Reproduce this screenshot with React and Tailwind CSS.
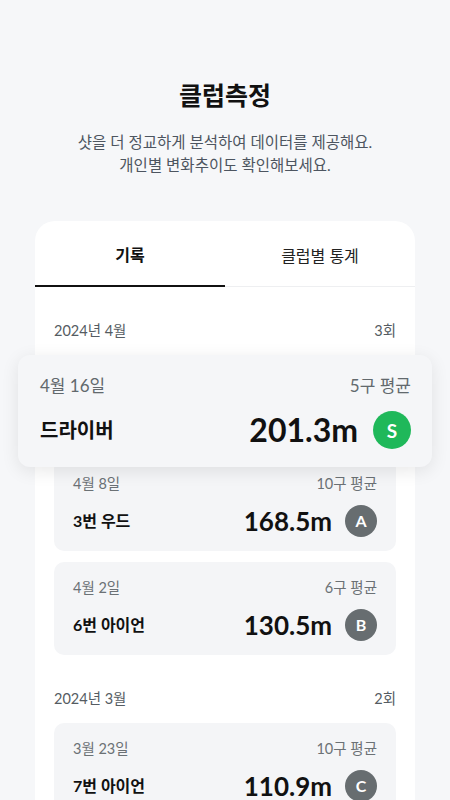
import React, { useState } from 'react'

const MONTHS = [
    {
        label: '2024년 4월',
        count: '3회',
        items: [
            { date: '4월 16일', shots: '5구 평균', club: '드라이버', dist: '201.3m', grade: 'S' },
            { date: '4월 8일', shots: '10구 평균', club: '3번 우드', dist: '168.5m', grade: 'A' },
            { date: '4월 2일', shots: '6구 평균', club: '6번 아이언', dist: '130.5m', grade: 'B' },
        ],
    },
    {
        label: '2024년 3월',
        count: '2회',
        items: [
            { date: '3월 23일', shots: '10구 평균', club: '7번 아이언', dist: '110.9m', grade: 'C' },
            { date: '3월 11일', shots: '8구 평균', club: '9번 아이언', dist: '96.2m', grade: 'B' },
        ],
    },
]

function Grade({ grade, big }) {
    const color = grade === 'S' ? 'bg-[#1fb85a]' : 'bg-[#676d70]'
    return (
        <span
            className={`${color} ${big ? 'w-[38px] h-[38px] text-[19px]' : 'w-8 h-8 text-[16px]'} rounded-full flex items-center justify-center text-white font-bold leading-none shrink-0`}
        >
            {grade}
        </span>
    )
}

function RecordCard({ item }) {
    return (
        <div className="bg-[#f4f5f7] rounded-[10px] px-[19px] pt-4 pb-[14px]">
            <div className="flex items-center justify-between h-5 text-[14.5px] leading-5 text-[#6b7175]">
                <span>{item.date}</span>
                <span>{item.shots}</span>
            </div>
            <div className="flex items-center h-8 mt-[11px]">
                <span className="flex-1 text-[16px] leading-6 font-bold text-[#111]">{item.club}</span>
                <span className="text-[26px] leading-8 font-bold text-[#111] mr-[13px]">{item.dist}</span>
                <Grade grade={item.grade} />
            </div>
        </div>
    )
}

// the most recent record pops out above the list
function FeaturedCard({ item }) {
    return (
        <div className="relative z-10 -mx-[36px] bg-[#f5f6f8] rounded-[12px] shadow-[0_4px_18px_rgba(0,0,0,0.09)] pl-[22px] pr-[21px] pt-5 pb-[18px]">
            <div className="flex items-center justify-between h-[22px] text-[17px] leading-[22px] text-[#62696d]">
                <span>{item.date}</span>
                <span>{item.shots}</span>
            </div>
            <div className="flex items-center h-[38px] mt-[14px]">
                <span className="flex-1 text-[20px] leading-7 font-bold text-[#111]">{item.club}</span>
                <span className="text-[32px] leading-[38px] font-bold text-[#111] mr-[15px]">{item.dist}</span>
                <Grade grade={item.grade} big />
            </div>
        </div>
    )
}

export default function App() {
    const [tab, setTab] = useState(0)

    return (
        <div className="min-h-screen bg-[#f6f7f9] font-['Lato','Noto_Sans_CJK_KR',sans-serif] flex flex-col items-center pt-[79px] overflow-hidden">
            <h1 className="text-[25px] leading-8 font-bold text-[#111]">클럽측정</h1>
            <p className="mt-5 text-[15.5px] leading-[23px] text-[#4d5560] text-center">
                샷을 더 정교하게 분석하여 데이터를 제공해요.
                <br />
                개인별 변화추이도 확인해보세요.
            </p>

            <div className="mt-[44px] w-[380px] bg-white rounded-t-[20px] flex-1">
                {/* Tabs */}
                <div className="flex border-b border-[#eeeff1]">
                    {['기록', '클럽별 통계'].map((t, i) => (
                        <button
                            key={t}
                            onClick={() => setTab(i)}
                            className={`flex-1 h-[66px] pt-[4px] text-[16px] -mb-px ${tab === i ? 'font-bold text-[#111] border-b-2 border-[#111]' : 'text-[#222]'}`}
                        >
                            {t}
                        </button>
                    ))}
                </div>

                <div className="px-[19px]">
                    {MONTHS.map((m) => (
                        <section key={m.label} className="pt-[34px]">
                            <div className="flex items-center justify-between h-5 text-[14.5px] leading-5 text-[#555c62] mb-[14px]">
                                <span>{m.label}</span>
                                <span>{m.count}</span>
                            </div>
                            <div className="flex flex-col gap-[11px]">
                                {m.items.map((item, i) =>
                                    m === MONTHS[0] && i === 0 ? (
                                        <div key={item.date} className="-mb-[20px]">
                                            <FeaturedCard item={item} />
                                        </div>
                                    ) : (
                                        <RecordCard key={item.date} item={item} />
                                    )
                                )}
                            </div>
                        </section>
                    ))}
                </div>
            </div>
        </div>
    )
}
